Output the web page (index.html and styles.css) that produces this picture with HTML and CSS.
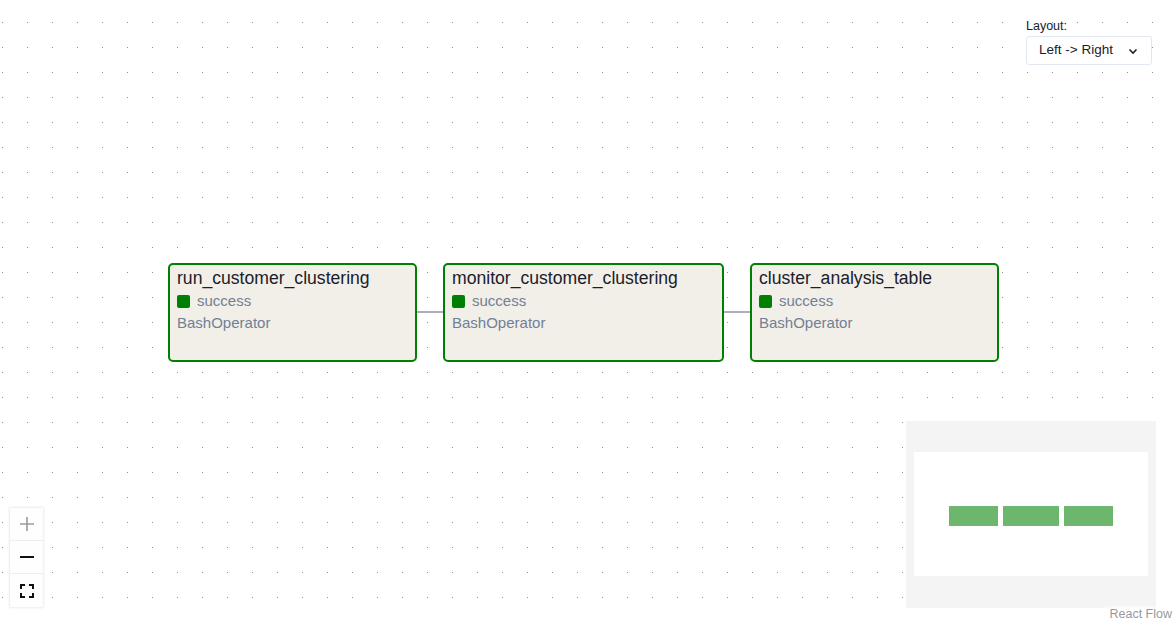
FILE: index.html
```html
<!DOCTYPE html>
<html lang="en">
<head>
    <meta charset="UTF-8">
    <meta name="viewport" content="width=device-width, initial-scale=1.0">
    <title>DAG Graph</title>
    <link rel="stylesheet" href="styles.css">
</head>
<body>
    <div class="flow">
        <div class="layout-picker">
            <label class="layout-label">Layout:</label>
            <div class="select">
                <span>Left -&gt; Right</span>
                <svg width="12" height="12" viewBox="0 0 12 12"><path d="M2.5 4.5 L6 8 L9.5 4.5" fill="none" stroke="#1a202c" stroke-width="1.6"/></svg>
            </div>
        </div>

        <div class="edge" style="left: 417px; width: 26px;"></div>
        <div class="edge" style="left: 724px; width: 26px;"></div>

        <div class="node" style="left: 168px; width: 249px;">
            <div class="task-id">run_customer_clustering</div>
            <div class="state"><span class="state-box"></span>success</div>
            <div class="operator">BashOperator</div>
        </div>
        <div class="node" style="left: 443px; width: 281px;">
            <div class="task-id">monitor_customer_clustering</div>
            <div class="state"><span class="state-box"></span>success</div>
            <div class="operator">BashOperator</div>
        </div>
        <div class="node" style="left: 750px; width: 249px;">
            <div class="task-id">cluster_analysis_table</div>
            <div class="state"><span class="state-box"></span>success</div>
            <div class="operator">BashOperator</div>
        </div>

        <div class="controls">
            <button class="control">
                <svg width="16" height="16" viewBox="0 0 16 16"><path d="M8 1 V15 M1 8 H15" stroke="#9a9a9a" stroke-width="1.6"/></svg>
            </button>
            <button class="control">
                <svg width="16" height="16" viewBox="0 0 16 16"><path d="M1 8 H15" stroke="#111" stroke-width="2"/></svg>
            </button>
            <button class="control">
                <svg width="14" height="14" viewBox="0 0 14 14"><path d="M1 5 V1 H5 M9 1 H13 V5 M13 9 V13 H9 M5 13 H1 V9" fill="none" stroke="#111" stroke-width="2"/></svg>
            </button>
        </div>

        <div class="minimap">
            <div class="viewport">
                <div class="mini-node" style="width: 49px;"></div>
                <div class="mini-node" style="width: 56px;"></div>
                <div class="mini-node" style="width: 49px;"></div>
            </div>
        </div>

        <div class="attribution">React Flow</div>
    </div>
</body>
</html>
```

FILE: styles.css
```css
body {
    margin: 0;
    font-family: "Liberation Sans", Arial, sans-serif;
    background: #fff;
}
.flow {
    position: relative;
    width: 1176px;
    height: 622px;
    overflow: hidden;
    background-image: radial-gradient(circle, #91919a 0.6px, transparent 0.9px);
    background-size: 25px 25px;
    background-position: -10px 10px;
}
.layout-picker {
    position: absolute;
    left: 1026px;
    top: 19px;
}
.layout-label {
    display: block;
    font-size: 12.5px;
    color: #1a202c;
    margin-bottom: 3px;
}
.select {
    box-sizing: border-box;
    width: 126px;
    height: 29px;
    background: #fff;
    border: 1px solid #e2e8f0;
    border-radius: 3px;
    display: flex;
    align-items: center;
    justify-content: space-between;
    padding: 0 12px 2px 12px;
    font-size: 13.5px;
    color: #1a202c;
}
.select svg {
    margin-top: 2px;
}
.edge {
    position: absolute;
    top: 311px;
    height: 2px;
    background: #a9afbb;
}
.node {
    position: absolute;
    top: 263px;
    height: 99px;
    box-sizing: border-box;
    border: 2px solid #008000;
    border-radius: 5px;
    background: #f2efe8;
    padding: 2px 7px;
}
.task-id {
    font-size: 17.6px;
    color: #1a202c;
    line-height: 23px;
}
.state {
    display: flex;
    align-items: center;
    font-size: 15px;
    color: #718096;
    line-height: 22px;
}
.state-box {
    width: 13px;
    height: 13px;
    border-radius: 2px;
    background: #008000;
    margin-right: 7px;
}
.operator {
    font-size: 15px;
    color: #718096;
    line-height: 22px;
}
.controls {
    position: absolute;
    left: 10px;
    top: 508px;
    width: 33px;
    background: #fefefe;
    box-shadow: 0 0 2px 1px rgba(0,0,0,0.08);
}
.control {
    display: flex;
    align-items: center;
    justify-content: center;
    width: 33px;
    height: 33px;
    padding: 0;
    border: none;
    border-bottom: 1px solid #eee;
    background: #fefefe;
}
.control:last-child {
    border-bottom: none;
}
.minimap {
    position: absolute;
    left: 906px;
    top: 421px;
    width: 250px;
    height: 187px;
    background: #f4f4f4;
    display: flex;
    align-items: center;
    justify-content: center;
}
.viewport {
    width: 234px;
    height: 124px;
    margin-top: -1px;
    background: #fff;
    display: flex;
    align-items: center;
    justify-content: center;
    gap: 5px;
}
.mini-node {
    height: 20px;
    margin-top: 4px;
    background: #6db66d;
}
.attribution {
    position: absolute;
    right: 0;
    bottom: 0;
    padding: 1px 4px 1px 4px;
    background: rgba(255,255,255,0.5);
    font-size: 12.5px;
    color: #999;
}
```
